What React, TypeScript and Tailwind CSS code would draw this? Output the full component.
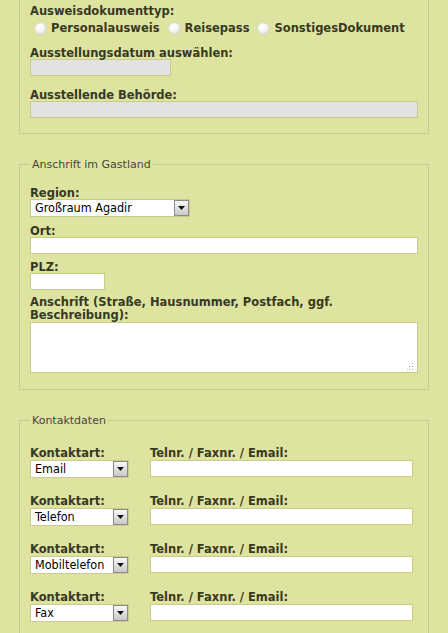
import React from 'react';

const labelCls = "block font-['DejaVu_Sans',sans-serif] text-[11.5px] leading-[12px] font-bold text-[#363a22]";
const legendCls = "ml-0 px-[2px] font-['DejaVu_Sans',sans-serif] text-[11px] leading-[13px] text-[#454540]";
const inputCls = "block h-[17px] border border-[#c7cb8c] outline-none";

const Radio = ({ label }: { label: string }) => (
  <span className="inline-flex items-center">
    <span className="w-[11px] h-[11px] rounded-full bg-[radial-gradient(circle_at_40%_35%,#ffffff_0%,#f4f4f2_45%,#cdcdc8_100%)] shadow-[0_0_0_1px_#d8dbbd]" />
    <span className="ml-[5px] font-['DejaVu_Sans',sans-serif] text-[11.5px] leading-[12px] font-bold text-[#363a22]">{label}</span>
  </span>
);

const FakeSelect = ({ value, width }: { value: string; width: string }) => (
  <div className={`flex h-[18px] items-stretch border border-[#c7cb8c] bg-white ${width}`}>
    <span className="flex-1 pl-[4px] font-['DejaVu_Sans_Condensed','Liberation_Sans',Arial,sans-serif] text-[12.5px] leading-[16px] text-black whitespace-nowrap overflow-hidden">
      {value}
    </span>
    <span className="flex w-[15px] items-center justify-center border border-[#8a8a8a] bg-gradient-to-b from-[#f8f8f8] to-[#c8c8c8]">
      <svg width="7" height="4" viewBox="0 0 7 4">
        <path d="M0 0h7L3.5 4z" fill="#111" />
      </svg>
    </span>
  </div>
);

const ContactRow = ({ kind }: { kind: string }) => (
  <div className="flex gap-[21px]">
    <div className="w-[99px]">
      <span className={labelCls}>Kontaktart:</span>
      <div className="mt-[1px]">
        <FakeSelect value={kind} width="w-[99px]" />
      </div>
    </div>
    <div>
      <span className={labelCls}>Telnr. / Faxnr. / Email:</span>
      <input type="text" className={`${inputCls} mt-[1px] w-[263px] bg-white`} />
    </div>
  </div>
);

export default function App() {
  return (
    <div className="min-h-screen overflow-hidden bg-[#dfe3a0] px-[19px]">
      {/* Ausweisdokument (top border is above the visible area) */}
      <fieldset className="border border-t-0 border-[#c7cb8c] px-[10px] pt-[5px] pb-[15px]">
        <span className={labelCls}>Ausweisdokumenttyp:</span>
        <div className="mt-[4px] flex h-[14px] items-center gap-[9px] pl-[5px]">
          <Radio label="Personalausweis" />
          <Radio label="Reisepass" />
          <Radio label="SonstigesDokument" />
        </div>
        <span className={`${labelCls} mt-[12px]`}>Ausstellungsdatum auswählen:</span>
        <input type="text" disabled className={`${inputCls} w-[141px] bg-[#e2e2e2]`} />
        <span className={`${labelCls} mt-[13px]`}>Ausstellende Behörde:</span>
        <input type="text" disabled className={`${inputCls} w-full bg-[#e2e2e2]`} />
      </fieldset>

      {/* Anschrift im Gastland */}
      <fieldset className="mt-[24px] border border-[#c7cb8c] px-[10px] pt-[16px] pb-[16px]">
        <legend className={legendCls}>Anschrift im Gastland</legend>
        <span className={labelCls}>Region:</span>
        <FakeSelect value="Großraum Agadir" width="w-[160px]" />
        <span className={`${labelCls} mt-[8px]`}>Ort:</span>
        <input type="text" className={`${inputCls} w-full bg-white`} />
        <span className={`${labelCls} mt-[7px]`}>PLZ:</span>
        <input type="text" className={`${inputCls} w-[75px] bg-white`} />
        <span className={`${labelCls} mt-[6px] leading-[13px]`}>
          Anschrift (Straße, Hausnummer, Postfach, ggf. Beschreibung):
        </span>
        <div className="relative">
          <textarea className="block h-[51px] w-full resize-none border border-[#c7cb8c] bg-white outline-none" />
          <svg className="absolute right-[4px] bottom-[3px]" width="7" height="7" viewBox="0 0 7 7">
            <rect x="5" y="0" width="1" height="1" fill="#a8a8a8" />
            <rect x="5" y="3" width="1" height="1" fill="#a8a8a8" />
            <rect x="2" y="3" width="1" height="1" fill="#a8a8a8" />
            <rect x="5" y="6" width="1" height="1" fill="#a8a8a8" />
            <rect x="2" y="6" width="1" height="1" fill="#a8a8a8" />
            <rect x="0" y="6" width="1" height="1" fill="#c0c0c0" />
          </svg>
        </div>
      </fieldset>

      {/* Kontaktdaten */}
      <fieldset className="mt-[24px] border border-[#c7cb8c] px-[10px] pt-[20px] pb-[40px]">
        <legend className={legendCls}>Kontaktdaten</legend>
        <div className="flex flex-col gap-[17px]">
          <ContactRow kind="Email" />
          <ContactRow kind="Telefon" />
          <ContactRow kind="Mobiltelefon" />
          <ContactRow kind="Fax" />
        </div>
      </fieldset>
    </div>
  );
}
